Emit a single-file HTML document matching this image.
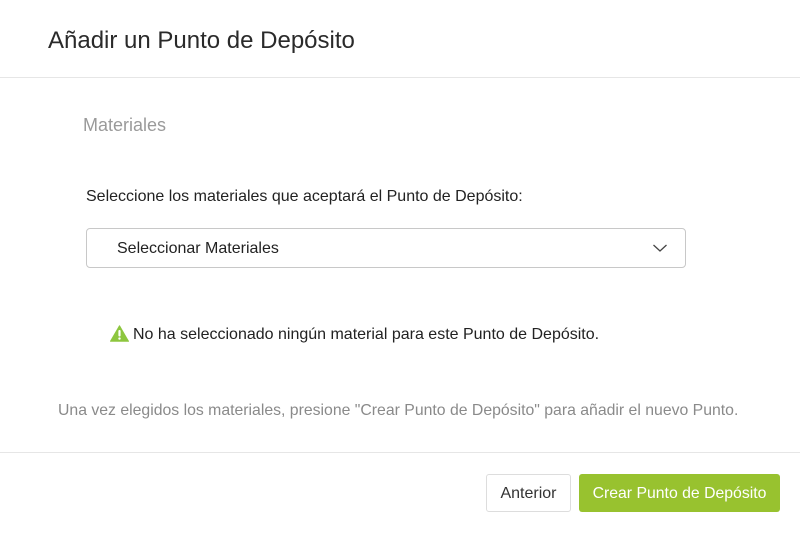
<!DOCTYPE html>
<html><head><meta charset="utf-8"><style>
*{margin:0;padding:0;box-sizing:border-box}
body{width:800px;height:533px;background:#fff;font-family:"Liberation Sans",sans-serif;position:relative;overflow:hidden;color:#222}
.a{position:absolute;white-space:nowrap}
.hr{position:absolute;left:0;width:800px;height:1px;background:#e6e6e6}
</style></head><body>
<div class="a" style="left:48px;top:27px;font-size:24px;color:#2a2a2a">Añadir un Punto de Depósito</div>
<div class="hr" style="top:77px"></div>
<div class="a" style="left:83px;top:115px;font-size:18px;color:#9a9a9a">Materiales</div>
<div class="a" style="left:86px;top:188px;font-size:16px;color:#222">Seleccione los materiales que aceptará el Punto de Depósito:</div>
<div class="a" style="left:86px;top:228px;width:600px;height:40px;border:1px solid #c8c8c8;border-radius:4px"></div>
<div class="a" style="left:117px;top:240px;font-size:16px;color:#222">Seleccionar Materiales</div>
<svg class="a" style="left:652px;top:243px" width="16" height="10" viewBox="0 0 16 10"><path d="M1.5 2L8 8L14.5 2" fill="none" stroke="#444" stroke-width="1.3"/></svg>
<svg class="a" style="left:110px;top:325px" width="19" height="17" viewBox="0 0 19 17"><path d="M9.5 0.8L18.5 16.3H0.5Z" fill="#8dc63f" stroke="#8dc63f" stroke-linejoin="round" stroke-width="1"/><rect x="8.4" y="5" width="2.2" height="6.5" rx="1" fill="#fff"/><circle cx="9.5" cy="13.6" r="1.2" fill="#fff"/></svg>
<div class="a" style="left:133px;top:326px;font-size:16px;color:#222">No ha seleccionado ningún material para este Punto de Depósito.</div>
<div class="a" style="left:58px;top:402px;font-size:15.8px;color:#8a8a8a">Una vez elegidos los materiales, presione "Crear Punto de Depósito" para añadir el nuevo Punto.</div>
<div class="hr" style="top:452px"></div>
<div class="a" style="left:486px;top:474px;width:85px;height:38px;border:1px solid #ddd;border-radius:3px;font-size:16px;color:#333;text-align:center;line-height:37px">Anterior</div>
<div class="a" style="left:579px;top:474px;width:201px;height:38px;background:#98c22f;border-radius:3px;font-size:15.8px;color:#fff;text-align:center;line-height:39px">Crear Punto de Depósito</div>
</body></html>
